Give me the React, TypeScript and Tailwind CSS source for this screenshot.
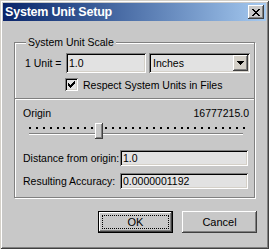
import React from 'react';

// classic 3D edges
const sunken =
  'shadow-[inset_1px_1px_0_#808080,inset_-1px_-1px_0_#ffffff,inset_2px_2px_0_#000000,inset_-2px_-2px_0_#d4d0c8]';
const raised =
  'shadow-[inset_-1px_-1px_0_#404040,inset_1px_1px_0_#ffffff,inset_-2px_-2px_0_#808080]';

const CloseGlyph = () => (
  <svg width="8" height="7" viewBox="0 0 8 7" shapeRendering="crispEdges">
    <path
      d="M0 0h2v1H0zM6 0h2v1H6zM1 1h2v1H1zM5 1h2v1H5zM2 2h4v1H2zM3 3h2v1H3zM2 4h4v1H2zM1 5h2v1H1zM5 5h2v1H5zM0 6h2v1H0zM6 6h2v1H6z"
      fill="#000"
    />
  </svg>
);

const CheckGlyph = () => (
  <svg width="7" height="7" viewBox="0 0 7 7" shapeRendering="crispEdges">
    <path
      d="M6 0h1v1H6zM5 1h2v1H5zM0 2h1v1H0zM4 2h3v1H4zM0 3h2v1H0zM3 3h3v1H3zM0 4h5v1H0zM1 5h3v1H1zM2 6h1v1H2z"
      fill="#000"
    />
  </svg>
);

const Field = ({ value, w }: { value: string; w: string }) => (
  <div className={`${w} h-[16px] bg-[#e2e2e2] ${sunken} flex items-center pl-[3px]`}>{value}</div>
);

const App = () => {
  const ticks = Array.from({ length: 32 });

  return (
    <div className="w-[269px] h-[249px] bg-[#c8c8c8] p-[3px] text-black text-[10.5px] leading-[12px] font-['Liberation_Sans',Arial,sans-serif] shadow-[inset_1px_1px_0_#d4d0c8,inset_-1px_-1px_0_#404040,inset_2px_2px_0_#ffffff,inset_-2px_-2px_0_#808080]">
      {/* title bar */}
      <div className="h-[18px] flex items-center justify-between bg-gradient-to-r from-[#0a246a] to-[#a6caf0]">
        <span className="pl-[2px] text-white font-bold text-[12.5px] tracking-[-0.2px]">System Unit Setup</span>
        <div className={`w-[16px] h-[14px] mr-[2px] bg-[#c8c8c8] ${raised} flex items-center justify-center`}>
          <CloseGlyph />
        </div>
      </div>

      {/* group box */}
      <div className="relative mt-[21px] ml-[11px] w-[241px] border border-[#808080] shadow-[1px_1px_0_#ffffff,inset_1px_1px_0_#ffffff]">
        <span className="absolute left-[11px] top-[-7px] px-[2px] bg-[#c8c8c8]">System Unit Scale</span>

        <div className="h-[55px] pt-[10px]">
          <div className="flex items-center h-[20px] pl-[10px]">
            <span className="w-[41px]">1 Unit =</span>
            <div className={`w-[80px] h-[20px] bg-[#e2e2e2] ${sunken} flex items-center pl-[3px]`}>1.0</div>
            <div className={`ml-[3px] w-[101px] h-[20px] bg-[#e2e2e2] ${sunken} flex items-center justify-between pl-[4px] pr-[2px]`}>
              <span>Inches</span>
              <div className={`w-[15px] h-[16px] bg-[#d4d0c8] ${raised} flex items-center justify-center`}>
                <svg width="7" height="4" viewBox="0 0 7 4" shapeRendering="crispEdges">
                  <path d="M0 0h7v1H0zM1 1h5v1H1zM2 2h3v1H2zM3 3h1v1H3z" fill="#000" />
                </svg>
              </div>
            </div>
          </div>
          <div className="flex items-center mt-[5px] pl-[50px]">
            <div className={`w-[13px] h-[13px] bg-[#e2e2e2] ${sunken} flex items-center justify-center`}>
              <CheckGlyph />
            </div>
            <span className="ml-[5px]">Respect System Units in Files</span>
          </div>
        </div>

        <div className="h-[2px] border-t border-t-[#808080] border-b border-b-white" />

        <div className="h-[97px] pt-[7px] pl-[8px] pr-[5px]">
          <div className="flex justify-between">
            <span>Origin</span>
            <span>16777215.0</span>
          </div>

          <div className="relative ml-[6px] mt-[4px] w-[216px] h-[16px]">
            <div className="absolute left-0 right-0 top-[4px] flex justify-between">
              {ticks.map((_, i) => (
                <div key={i} className="w-[2px] h-[2px] bg-black" />
              ))}
            </div>
            <div className="absolute left-0 right-[2px] top-[10px] h-[2px] border-t border-t-[#808080] border-b border-b-white" />
            <div className={`absolute left-[66px] top-0 w-[8px] h-[16px] bg-[#c8c8c8] ${raised}`} />
          </div>

          <div className="flex items-center mt-[11px]">
            <span className="w-[97px]">Distance from origin:</span>
            <Field value="1.0" w="w-[128px]" />
          </div>
          <div className="flex items-center mt-[7px]">
            <span className="w-[97px]">Resulting Accuracy:</span>
            <Field value="0.0000001192" w="w-[128px]" />
          </div>
        </div>
      </div>

      {/* buttons */}
      <div className="flex mt-[13px] ml-[95px] gap-[9px]">
        <div className={`w-[75px] h-[22px] border border-black bg-[#c8c8c8] ${raised} p-[3px]`}>
          <div className="w-full h-full border border-dotted border-black flex items-center justify-center text-[11px]">
            OK
          </div>
        </div>
        <div className={`w-[75px] h-[22px] bg-[#c8c8c8] ${raised} flex items-center justify-center text-[11px]`}>
          Cancel
        </div>
      </div>
    </div>
  );
};

export default App;
